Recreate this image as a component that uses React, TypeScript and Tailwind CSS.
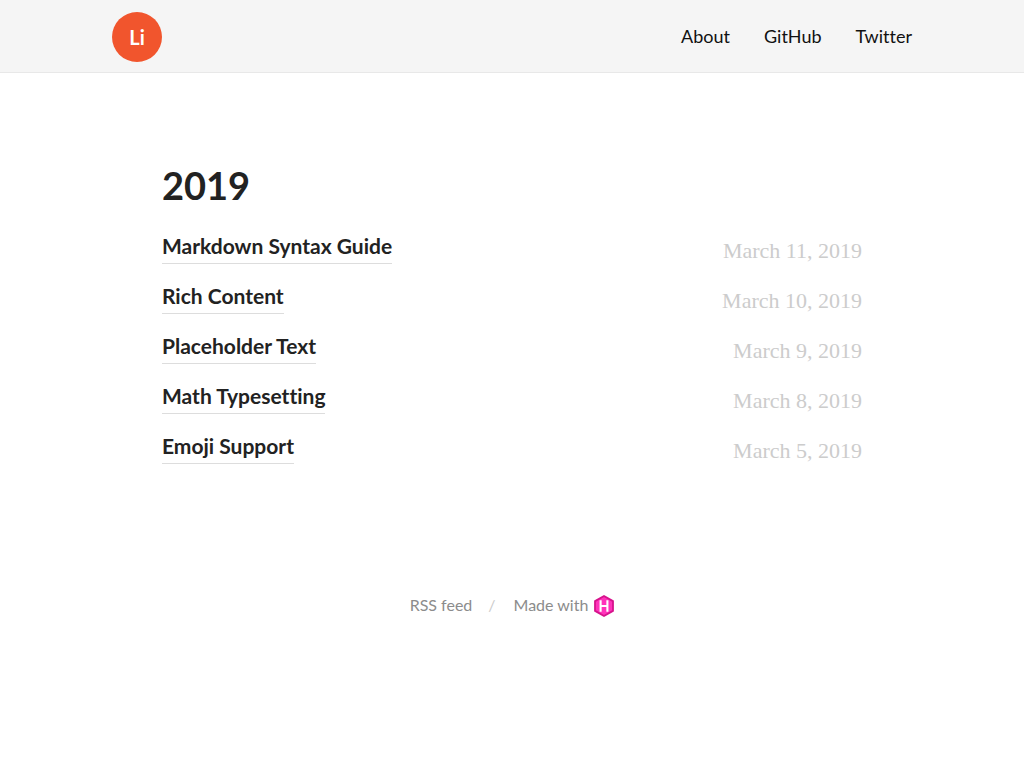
const posts = [
  { title: "Markdown Syntax Guide", date: "March 11, 2019", iso: "2019-03-11" },
  { title: "Rich Content", date: "March 10, 2019", iso: "2019-03-10" },
  { title: "Placeholder Text", date: "March 9, 2019", iso: "2019-03-09" },
  { title: "Math Typesetting", date: "March 8, 2019", iso: "2019-03-08" },
  { title: "Emoji Support", date: "March 5, 2019", iso: "2019-03-05" },
];

const links = ["About", "GitHub", "Twitter"];

function HugoLogo() {
  return (
    <svg viewBox="0 0 20 22" className="mt-0.5 h-[22px] w-5" aria-label="Hugo" role="img">
      <path
        d="M10 1 19 6.1v9.8L10 21 1 15.9V6.1Z"
        fill="#ff33ba"
        stroke="#d6138c"
        strokeWidth="1.8"
        strokeLinejoin="round"
      />
      <path d="M6.6 5.2v11.6M13.4 5.2v11.6M6.6 11h6.8" fill="none" stroke="#fff" strokeWidth="2.1" />
    </svg>
  );
}

function Header() {
  return (
    <header className="border-b border-[#e8e8e8] bg-[#f5f5f5] px-5">
      <div className="mx-auto flex h-18 max-w-[800px] items-center justify-between">
        <a
          href="#home"
          className="mt-0.5 flex size-[50px] items-center justify-center rounded-full bg-[#f1552d] text-xl font-bold text-white"
        >
          Li
        </a>
        <nav className="flex gap-[34px] text-lg text-[#111]">
          {links.map((link) => (
            <a key={link} href={"#" + link.toLowerCase()}>
              {link}
            </a>
          ))}
        </nav>
      </div>
    </header>
  );
}

export default function App() {
  return (
    <div className="font-['Lato',sans-serif] text-[#222] [font-variant-ligatures:none]">
      <Header />
      <main className="mx-auto max-w-[740px] px-5 pt-[88px]">
        <h1 className="text-[38px] leading-12 font-bold">2019</h1>
        <ul className="mt-5">
          {posts.map((post) => (
            <li key={post.title} className="flex h-[50px] items-start justify-between">
              <a
                href="#post"
                className="border-b border-[#ddd] pt-1 pb-[5px] text-[21px] leading-[25px] font-bold"
              >
                {post.title}
              </a>
              <time
                dateTime={post.iso}
                className="pt-2 font-['Liberation_Serif',serif] text-[22px] leading-7 text-[#ccc]"
              >
                {post.date}
              </time>
            </li>
          ))}
        </ul>
      </main>
      <footer className="flex items-center justify-center pt-[114px] text-base text-[#8c8c8c]">
        <a href="#rss">RSS feed</a>
        <span className="mx-4 text-[#ccc]">/</span>
        <a href="#hugo" className="ml-0.5 flex items-center gap-1.5">
          Made with
          <HugoLogo />
        </a>
      </footer>
    </div>
  );
}
